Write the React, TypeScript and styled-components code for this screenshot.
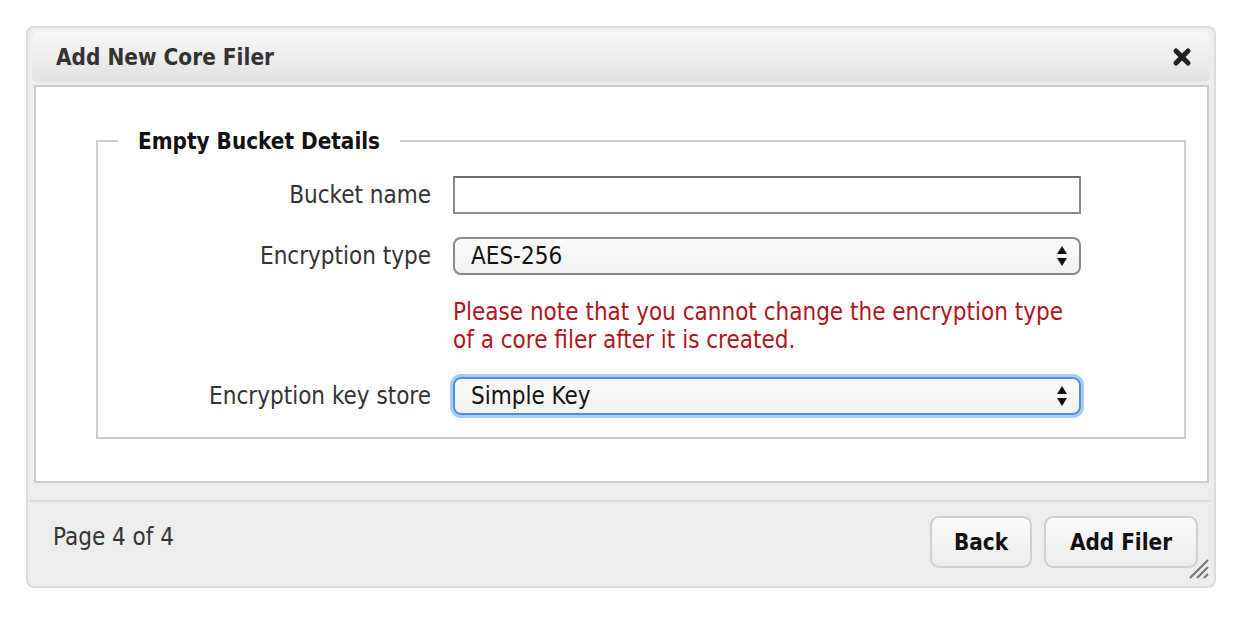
import React from "react";
import styled, { createGlobalStyle } from "styled-components";

const GlobalStyle = createGlobalStyle`
  body {
    margin: 0;
    background: #fff;
    font-family: "DejaVu Sans Condensed", "DejaVu Sans", sans-serif;
    font-size: 24px;
    color: #333;
  }
`;

const Page = styled.div`
  padding: 26px 0 0 26px;
`;

const Dialog = styled.div`
  position: relative;
  box-sizing: border-box;
  width: 1190px;
  height: 562px;
  border: 2px solid #dcdcdc;
  border-radius: 8px;
  background: #ededed;
  padding: 4px 4px 0 4px;
  display: flex;
  flex-direction: column;
`;

const TitleBar = styled.div`
  height: 50px;
  border-radius: 6px;
  background: linear-gradient(#f8f8f8, #e2e2e2);
  display: flex;
  align-items: center;
  justify-content: space-between;
  padding: 0 18px 0 24px;
`;

const Title = styled.div`
  font-weight: bold;
  font-size: 22.4px;
  color: #333;
`;

const CloseButton = styled.button`
  border: 0;
  background: none;
  padding: 0;
  width: 20px;
  height: 20px;
  display: flex;
  cursor: pointer;
`;

const Content = styled.div`
  margin: 3px 1px 0 2px;
  height: 398px;
  box-sizing: border-box;
  border: 2px solid #cccccc;
  background: #fff;
  padding: 40px 21px 0 60px;
`;

const Fieldset = styled.fieldset`
  margin: 0;
  border: 2px solid #cccccc;
  padding: 21px 0 22px 0;
  min-inline-size: auto;
`;

const Legend = styled.legend`
  margin-left: 20px;
  padding: 0 20px;
  font-weight: bold;
  font-size: 22.3px;
  color: #111;
  line-height: 28px;
`;

const FormGrid = styled.div`
  display: grid;
  grid-template-columns: 333px 628px;
  column-gap: 22px;
  row-gap: 23px;
  align-items: center;
`;

const Label = styled.label`
  text-align: right;
  color: #333;
`;

const TextInput = styled.input`
  box-sizing: border-box;
  height: 38px;
  border: 2px solid #8a8a8a;
  border-top-color: #6e6e6e;
  background: #fff;
  font: inherit;
  padding: 0 14px;
  outline: none;
`;

const SelectWrap = styled.div`
  position: relative;
  display: flex;
`;

const Select = styled.select<{ $focused?: boolean }>`
  appearance: none;
  box-sizing: border-box;
  width: 100%;
  height: 38px;
  border-radius: 8px;
  border: 2px solid ${({ $focused }) => ($focused ? "#4a8fe0" : "#8a8a8a")};
  box-shadow: ${({ $focused }) => ($focused ? "0 0 0 3px #a9cdf8" : "none")};
  background: linear-gradient(#fbfbfb, #f2f2f2);
  font: inherit;
  color: #111;
  padding: 0 40px 0 16px;
  outline: none;
`;

const Arrows = styled.svg`
  position: absolute;
  right: 13px;
  top: 50%;
  transform: translateY(-50%);
  pointer-events: none;
`;

const Note = styled.div`
  grid-column: 2;
  color: #b0141c;
  line-height: 28px;
`;

const Footer = styled.div`
  margin: 17px 0 0 -2px;
  border-top: 2px solid #dcdcdc;
  display: flex;
  justify-content: space-between;
  align-items: flex-start;
  padding: 14px 12px 0 23px;
`;

const PageInfo = styled.div`
  margin-top: 7px;
  line-height: 28px;
  color: #333;
`;

const Buttons = styled.div`
  display: flex;
  gap: 12px;
`;

const Button = styled.button<{ $width: number }>`
  width: ${({ $width }) => $width}px;
  height: 52px;
  border: 2px solid #cfcfcf;
  border-radius: 9px;
  background: linear-gradient(#fbfbfb, #ececec);
  font: inherit;
  font-size: 22.3px;
  font-weight: bold;
  color: #111;
  cursor: pointer;
`;

const Grip = styled.svg`
  position: absolute;
  right: 4px;
  bottom: 6px;
`;

const SelectArrows = () => (
  <Arrows width="12" height="22" viewBox="0 0 12 22">
    <path d="M6 1 L11 9 L1 9 Z" fill="#111" />
    <path d="M6 21 L11 13 L1 13 Z" fill="#111" />
  </Arrows>
);

export default function App() {
  return (
    <Page>
      <GlobalStyle />
      <Dialog>
        <TitleBar>
          <Title>Add New Core Filer</Title>
          <CloseButton aria-label="close">
            <svg width="20" height="20" viewBox="0 0 20 20">
              <path
                d="M4 4 L16 16 M16 4 L4 16"
                stroke="#222"
                strokeWidth="5"
                strokeLinecap="round"
              />
            </svg>
          </CloseButton>
        </TitleBar>
        <Content>
          <Fieldset>
            <Legend>Empty Bucket Details</Legend>
            <FormGrid>
              <Label>Bucket name</Label>
              <TextInput type="text" />
              <Label>Encryption type</Label>
              <SelectWrap>
                <Select defaultValue="aes">
                  <option value="aes">AES-256</option>
                </Select>
                <SelectArrows />
              </SelectWrap>
              <Note>
                Please note that you cannot change the encryption type
                <br />
                of a core filer after it is created.
              </Note>
              <Label>Encryption key store</Label>
              <SelectWrap>
                <Select $focused defaultValue="simple">
                  <option value="simple">Simple Key</option>
                </Select>
                <SelectArrows />
              </SelectWrap>
            </FormGrid>
          </Fieldset>
        </Content>
        <Footer>
          <PageInfo>Page 4 of 4</PageInfo>
          <Buttons>
            <Button $width={102}>Back</Button>
            <Button $width={154}>Add Filer</Button>
          </Buttons>
        </Footer>
        <Grip width="24" height="24" viewBox="0 0 24 24">
          <path
            d="M22 4 L4 22 M22 11 L11 22 M22 18 L18 22"
            stroke="#777"
            strokeWidth="2.2"
          />
        </Grip>
      </Dialog>
    </Page>
  );
}
